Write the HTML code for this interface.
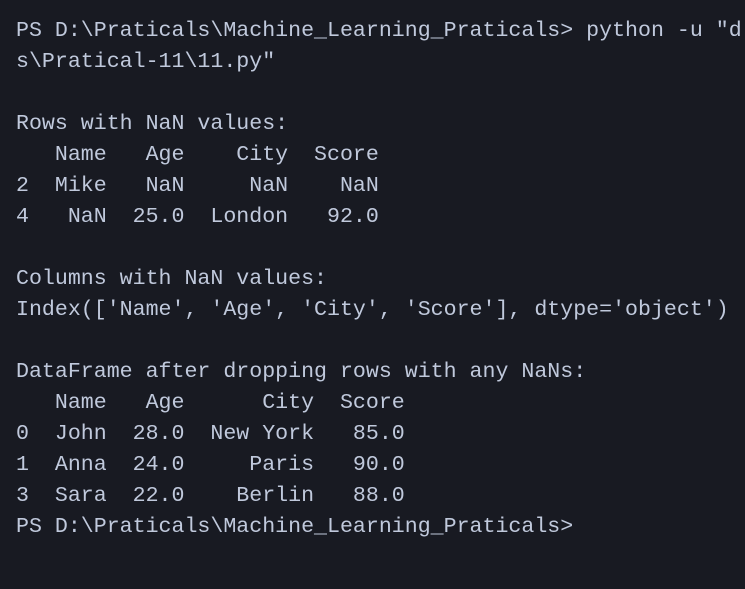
<!DOCTYPE html><html><head><style>
html,body{margin:0;background:#181a22;width:745px;height:589px;overflow:hidden}
pre{margin:0;padding:16px 0 0 16px;font-family:"Liberation Mono",monospace;font-size:21.6px;line-height:31px;color:#c0c9dc;white-space:pre}
</style></head><body><pre>PS D:\Praticals\Machine_Learning_Praticals&gt; python -u "d
s\Pratical-11\11.py"

Rows with NaN values:
   Name   Age    City  Score
2  Mike   NaN     NaN    NaN
4   NaN  25.0  London   92.0

Columns with NaN values:
Index(['Name', 'Age', 'City', 'Score'], dtype='object')

DataFrame after dropping rows with any NaNs:
   Name   Age      City  Score
0  John  28.0  New York   85.0
1  Anna  24.0     Paris   90.0
3  Sara  22.0    Berlin   88.0
PS D:\Praticals\Machine_Learning_Praticals&gt;</pre></body></html>
